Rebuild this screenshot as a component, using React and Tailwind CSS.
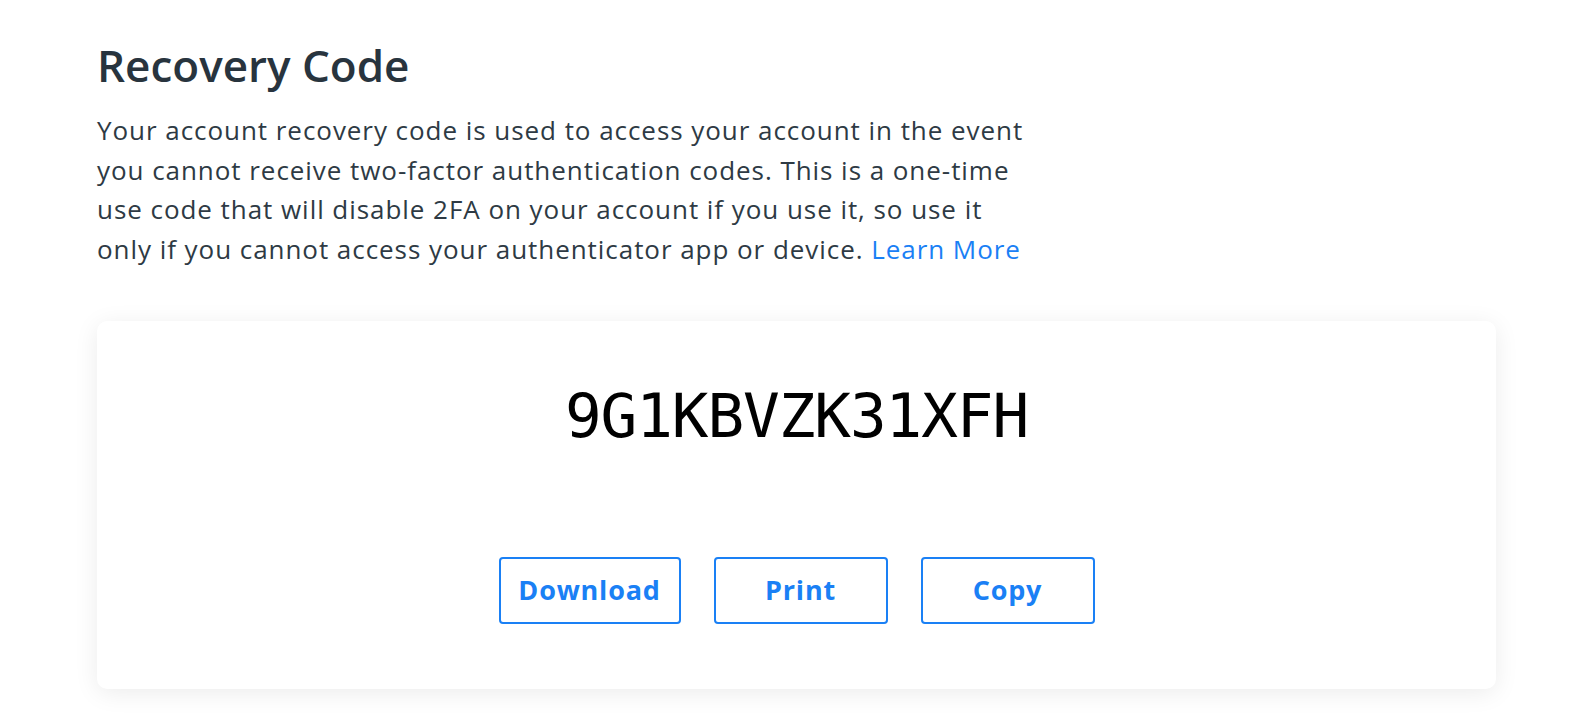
export default function App() {
  return (
    <div className="min-h-screen bg-white" style={{ fontFamily: '"Open Sans", sans-serif' }}>
      <div className="pl-[97px] pr-[76px] pt-[35px]">
        <h1 className="text-[44px] leading-[60px] font-semibold text-[#28343e]">Recovery Code</h1>
        <p className="mt-[16px] w-[940px] text-[26px] leading-[39.7px] tracking-[0.95px] text-[#2e3a44]">
          Your account recovery code is used to access your account in the event you cannot receive two-factor authentication codes. This is a one-time use code that will disable 2FA on your account if you use it, so use it only if you cannot access your authenticator app or device.{' '}
          <a className="text-[#1a80f5]">Learn More</a>
        </p>
        <div className="mt-[51px] h-[368px] rounded-[10px] bg-white shadow-[0_4px_24px_rgba(0,0,0,0.08)] flex flex-col items-center">
          <div
            className="mt-[55px] text-[61px] leading-[80px] tracking-[-1.1px] text-black"
            style={{ fontFamily: '"DejaVu Sans Mono", monospace' }}
          >
            9G1KBVZK31XFH
          </div>
          <div className="mt-[101px] flex gap-[33px]">
            <button className="h-[67px] w-[182px] rounded-[4px] border-2 border-[#1a80f5] text-[27px] tracking-[0.8px] font-bold text-[#1a80f5]">Download</button>
            <button className="h-[67px] w-[174px] rounded-[4px] border-2 border-[#1a80f5] text-[27px] tracking-[0.8px] font-bold text-[#1a80f5]">Print</button>
            <button className="h-[67px] w-[174px] rounded-[4px] border-2 border-[#1a80f5] text-[27px] tracking-[0.8px] font-bold text-[#1a80f5]">Copy</button>
          </div>
        </div>
      </div>
    </div>
  );
}
